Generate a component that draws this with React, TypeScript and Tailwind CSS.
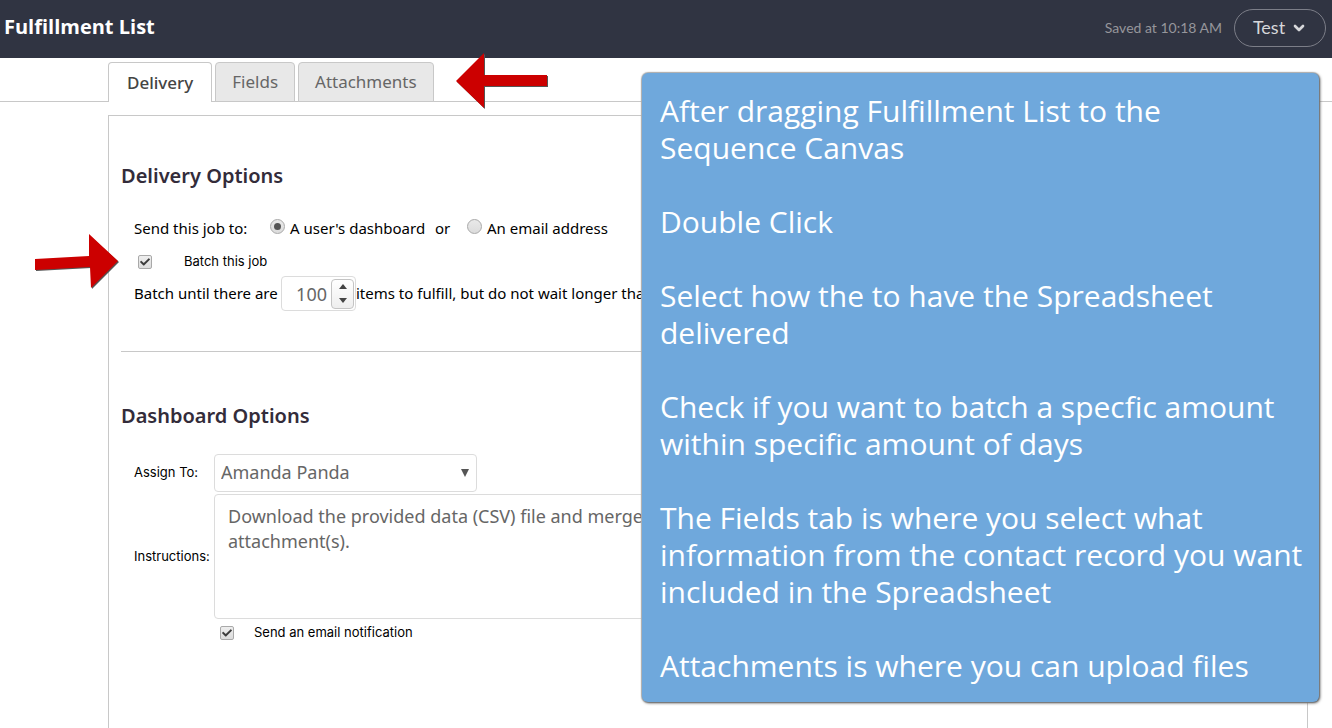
import * as React from "react";
import { FaCheck } from "react-icons/fa";
import { ChevronDown } from "lucide-react";

const tabs = ["Delivery", "Fields", "Attachments"];

function Header() {
  return (
    <header className="flex h-[58px] items-center justify-between bg-[#303442] pr-[6px] pb-[2px] pl-1 font-['Lato',sans-serif]">
      <h1 className="pb-[2px] font-['Open_Sans',sans-serif] text-xl leading-7 font-bold text-white">
        Fulfillment List
      </h1>
      <div className="flex items-center gap-3">
        <span className="text-sm text-[#96969b]">Saved at 10:18 AM</span>
        <button
          type="button"
          className="flex h-[38px] w-[92px] items-center justify-center gap-[6px] rounded-full border border-[#7c7e88] pb-[2px] text-lg text-[#d6d7da]"
        >
          Test
          <ChevronDown className="mt-[2px] size-4" strokeWidth={4} />
        </button>
      </div>
    </header>
  );
}

function Tabs() {
  const [active, setActive] = React.useState("Delivery");

  return (
    <nav className="border-b border-[#c8c8c8] pt-1 pl-[108px]">
      <div className="-mb-px flex gap-[3px]">
        {tabs.map((tab) => (
          <button
            key={tab}
            type="button"
            onClick={() => setActive(tab)}
            className={
              tab === active
                ? "h-10 rounded-t border border-b-0 border-[#c8c8c8] bg-white px-[18px] text-[17px] font-medium text-[#444]"
                : "h-10 rounded-t border border-[#c8c8c8] bg-[#e8e8e8] px-4 text-[17px] text-[#666]"
            }
          >
            {tab}
          </button>
        ))}
      </div>
    </nav>
  );
}

function Checkbox(props: { id: string }) {
  return (
    <span className="grid size-[14px] place-items-center">
      <input
        id={props.id}
        type="checkbox"
        defaultChecked
        className="peer col-start-1 row-start-1 size-[14px] appearance-none rounded-[2px] border border-[#a9a9a9] bg-linear-to-b from-[#eee] to-[#dcdcdc]"
      />
      <FaCheck className="pointer-events-none invisible col-start-1 row-start-1 size-[10px] text-[#3c3c3c] peer-checked:visible" />
    </span>
  );
}

function Radio(props: { id: string; defaultChecked?: boolean }) {
  return (
    <span className="mb-1 grid size-[15px] place-items-center">
      <input
        id={props.id}
        type="radio"
        name="recipient"
        defaultChecked={props.defaultChecked}
        className="peer col-start-1 row-start-1 size-[15px] appearance-none rounded-full border border-[#a9a9a9] bg-linear-to-b from-[#e9e9e9] to-[#dcdcdc]"
      />
      <span className="pointer-events-none invisible col-start-1 row-start-1 size-[7px] rounded-full bg-[#555] peer-checked:visible" />
    </span>
  );
}

function BatchSize() {
  const [value, setValue] = React.useState(100);

  return (
    <span className="flex h-[35px] w-[75px] items-center rounded border border-[#dcdcdc] pr-px">
      <input
        type="text"
        inputMode="numeric"
        aria-label="Batch size"
        value={value}
        onChange={(e) => setValue(Number(e.target.value) || 0)}
        className="w-0 flex-1 pr-1 text-right text-lg text-[#666] outline-none"
      />
      <span className="flex h-[30px] w-[23px] flex-col rounded border border-[#c4c4c4] bg-linear-to-b from-white to-[#eee]">
        <button
          type="button"
          aria-label="Increase"
          onClick={() => setValue(value + 1)}
          className="flex flex-1 items-center justify-center"
        >
          <svg viewBox="0 0 8 5" className="h-[5px] w-2 fill-[#444]">
            <path d="M0 5 4 0l4 5z" />
          </svg>
        </button>
        <button
          type="button"
          aria-label="Decrease"
          onClick={() => setValue(value - 1)}
          className="flex flex-1 items-center justify-center"
        >
          <svg viewBox="0 0 8 5" className="h-[5px] w-2 fill-[#444]">
            <path d="M0 0h8L4 5z" />
          </svg>
        </button>
      </span>
    </span>
  );
}

function DeliveryOptions() {
  return (
    <section className="border-b border-[#c8c8c8] pb-10">
      <h2 className="text-xl leading-8 font-semibold text-[#332c3a]">
        Delivery Options
      </h2>
      <div className="mt-4 flex h-10 items-center pl-[13px] whitespace-nowrap">
        <span className="w-[136px]">Send this job to:</span>
        <Radio id="to-user" defaultChecked />
        <label htmlFor="to-user" className="w-[150px] pl-[5px]">
          A user's dashboard
        </label>
        <span className="w-8">or</span>
        <Radio id="to-email" />
        <label htmlFor="to-email" className="pl-[5px]">
          An email address
        </label>
      </div>
      <div className="flex h-7 items-center gap-8 pl-[17px] font-['Inter',sans-serif] text-[13px]">
        <Checkbox id="batch" />
        <label htmlFor="batch">Batch this job</label>
      </div>
      <div className="flex items-center pl-[13px] whitespace-nowrap">
        <span className="w-[147px]">Batch until there are</span>
        <BatchSize />
        <span>items to fulfill, but do not wait longer than</span>
      </div>
    </section>
  );
}

function DashboardOptions() {
  return (
    <section className="pt-12">
      <h2 className="text-xl leading-8 font-semibold text-[#332c3a]">
        Dashboard Options
      </h2>
      <div className="mt-[22px] grid grid-cols-[80px_1fr] items-center gap-y-[2px] pl-[13px]">
        <label htmlFor="assign" className="font-['Inter',sans-serif] text-[13px]">
          Assign To:
        </label>
        <span className="grid w-[263px] items-center">
          <select
            id="assign"
            className="col-start-1 row-start-1 h-[38px] appearance-none rounded border border-[#dcdcdc] bg-white px-[6px] pb-[2px] text-lg text-[#666]"
          >
            <option>Amanda Panda</option>
          </select>
          <svg
            viewBox="0 0 8 8"
            className="pointer-events-none col-start-1 row-start-1 mr-2 size-2 justify-self-end fill-[#555]"
          >
            <path d="M0 0h8L4 8z" />
          </svg>
        </span>
        <label
          htmlFor="instructions"
          className="font-['Inter',sans-serif] text-[13px]"
        >
          Instructions:
        </label>
        <textarea
          id="instructions"
          defaultValue={
            "Download the provided data (CSV) file and merge\nattachment(s)."
          }
          className="h-[125px] w-full resize-none rounded border border-[#dcdcdc] px-[13px] py-[9px] text-lg leading-[25px] text-[#666]"
        />
      </div>
      <div className="flex h-7 items-center gap-[20px] pl-[99px] font-['Inter',sans-serif] text-[13px]">
        <Checkbox id="notify" />
        <label htmlFor="notify">Send an email notification</label>
      </div>
    </section>
  );
}

function Callout() {
  return (
    <aside className="absolute top-[73px] right-[13px] w-[677px] space-y-[37px] rounded-md bg-[#6fa8dc] px-[18px] pt-[19px] pb-[18px] font-['Open_Sans',sans-serif] text-[30px] leading-[37px] whitespace-nowrap text-white shadow-[1px_1px_3px_0_#555,0_0_1px_1px_#bbb]">
      <p>
        After dragging Fulfillment List to the
        <br />
        Sequence Canvas
      </p>
      <p>Double Click</p>
      <p>
        Select how the to have the Spreadsheet
        <br />
        delivered
      </p>
      <p>
        Check if you want to batch a specfic amount
        <br />
        within specific amount of days
      </p>
      <p>
        The Fields tab is where you select what
        <br />
        information from the contact record you want
        <br />
        included in the Spreadsheet
      </p>
      <p>Attachments is where you can upload files</p>
    </aside>
  );
}

export default function App() {
  return (
    <div className="relative flex h-screen flex-col overflow-hidden bg-white font-['Noto_Sans',sans-serif] text-[15px] text-black">
      <Header />
      <Tabs />
      <main className="mt-[13px] mr-6 ml-[108px] flex-1 border border-b-0 border-[#c8c8c8] px-3 pt-11">
        <DeliveryOptions />
        <DashboardOptions />
      </main>

      <svg
        viewBox="0 0 94 58"
        className="absolute top-[52px] left-[455px] h-[58px] w-[94px]"
      >
        <path d="M2 30 30 2v22h63v11H30v22z" fill="#555" />
        <path d="M1 29 29 1v22h63v11H29v22z" fill="#c00" />
      </svg>
      <svg
        viewBox="0 0 86 56"
        className="absolute top-[234px] left-[34px] h-14 w-[86px]"
      >
        <path d="M2 26 56 23 56 2 85 28 58 55 57 34 2 37z" fill="#555" />
        <path d="M1 25 55 22 55 0 84 27 57 54 56 33 1 36z" fill="#c00" />
      </svg>
      <Callout />
    </div>
  );
}
